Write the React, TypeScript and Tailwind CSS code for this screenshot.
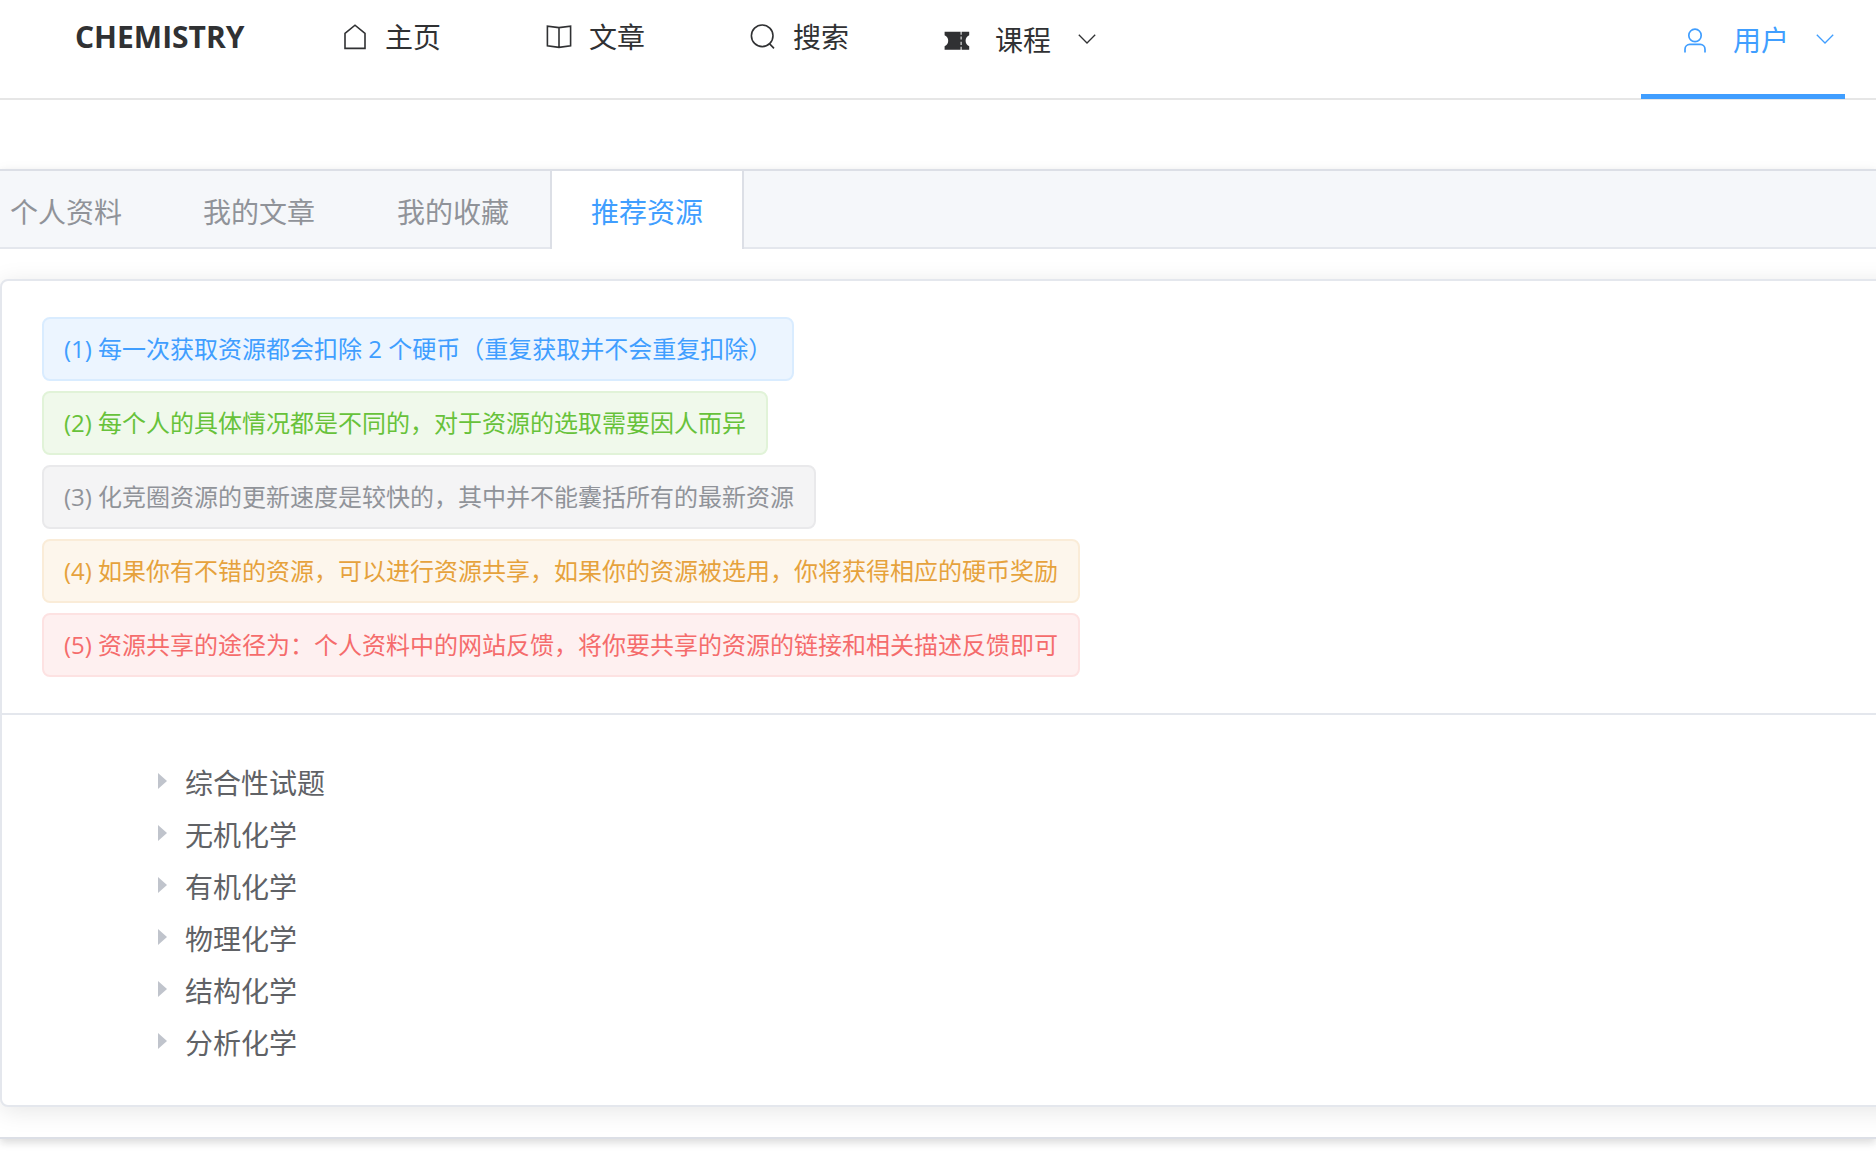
import React from 'react';
import clsx from 'clsx';

const navItems = [
  { label: '主页', icon: HouseIcon },
  { label: '文章', icon: BookIcon },
  { label: '搜索', icon: SearchIcon },
];

const tabs = ['个人资料', '我的文章', '我的收藏', '推荐资源'];

const notices = [
  { text: '(1) 每一次获取资源都会扣除 2 个硬币（重复获取并不会重复扣除）', color: 'bg-[#ecf5ff] border-[#d9ecff] text-[#409eff]' },
  { text: '(2) 每个人的具体情况都是不同的，对于资源的选取需要因人而异', color: 'bg-[#f0f9eb] border-[#e1f3d8] text-[#67c23a]' },
  { text: '(3) 化竞圈资源的更新速度是较快的，其中并不能囊括所有的最新资源', color: 'bg-[#f4f4f5] border-[#e9e9eb] text-[#909399]' },
  { text: '(4) 如果你有不错的资源，可以进行资源共享，如果你的资源被选用，你将获得相应的硬币奖励', color: 'bg-[#fdf6ec] border-[#faecd8] text-[#e6a23c]' },
  { text: '(5) 资源共享的途径为：个人资料中的网站反馈，将你要共享的资源的链接和相关描述反馈即可', color: 'bg-[#fef0f0] border-[#fde2e2] text-[#f56c6c]' },
];

const categories = ['综合性试题', '无机化学', '有机化学', '物理化学', '结构化学', '分析化学'];

function HouseIcon() {
  return (
    <svg viewBox="0 0 28 28" className="w-7 h-7" fill="none" stroke="currentColor" strokeWidth="1.6">
      <path d="M4 10.4 14 2.2l10 8.2v15H4z" />
    </svg>
  );
}

function BookIcon() {
  return (
    <svg viewBox="0 0 28 28" className="w-7 h-7" fill="none" stroke="currentColor" strokeWidth="1.6">
      <path d="M14 4.6 2.4 3.2v19.6L14 24.4l11.6-1.6V3.2zM14 4.6v19.8" />
    </svg>
  );
}

function SearchIcon() {
  return (
    <svg viewBox="0 0 28 28" className="w-7 h-7" fill="none" stroke="currentColor" strokeWidth="1.6">
      <circle cx="13.2" cy="12.8" r="10.8" />
      <path d="m20.4 20.6 4.6 4.8" />
    </svg>
  );
}

function TicketIcon() {
  return (
    <svg viewBox="0 0 28 28" className="w-7 h-7" fill="currentColor">
      <path d="M1.6 5.8h16v3h1v-3h7.6v3.4a6 6 0 0 0 0 11v3.6h-7.6v-3h-1v3h-16v-3.6a6 6 0 0 0 0-11zM17.6 10.6v3h1v-3zm0 5.2v3.2h1v-3.2z" fillRule="evenodd" />
    </svg>
  );
}

function UserIcon() {
  return (
    <svg viewBox="0 0 28 28" className="w-7 h-7" fill="none" stroke="currentColor" strokeWidth="1.7">
      <circle cx="14" cy="9.4" r="6.2" />
      <path d="M4 26.4v-3.2a4.8 4.8 0 0 1 4.8-4.8h10.4a4.8 4.8 0 0 1 4.8 4.8v3.2" />
    </svg>
  );
}

function ChevronIcon() {
  return (
    <svg viewBox="0 0 18 10" className="w-[18px] h-[10px] mb-0.5" fill="none" stroke="currentColor" strokeWidth="1.3">
      <path d="m.8.8 8.2 8.2L17.2.8" />
    </svg>
  );
}

function SubMenu({ label, icon, active }: { label: string; icon: React.ReactNode; active?: boolean }) {
  return (
    <button
      className={clsx(
        'flex items-center w-[204px] h-[99px] pt-0.5 pb-4 pl-[30px] border-b-[5px]',
        active ? 'border-[#409eff] text-[#409eff]' : 'border-transparent'
      )}
    >
      <span className="flex justify-center w-12">{icon}</span>
      <span className="ml-3.5 mr-[27px]">{label}</span>
      <ChevronIcon />
    </button>
  );
}

export default function App() {
  const [activeTab, setActiveTab] = React.useState('推荐资源');

  return (
    <div className="min-h-screen overflow-hidden bg-white text-[28px] leading-9 text-[#303133] font-['Open_Sans','Noto_Sans_CJK_SC',sans-serif]">
      {/* Top menu */}
      <header className="h-[100px] border-b-2 border-[#e6e6e6]">
        <nav className="flex items-start pr-[31px]">
          <a href="#" className="w-[291px] h-[74px] pl-[75px] flex items-center text-[30px] font-bold">CHEMISTRY</a>
          {navItems.map(({ label, icon: Icon }) => (
            <a key={label} href="#" className="flex items-center gap-1.5 w-[204px] h-[74px] pl-10">
              <span className="flex justify-center w-12"><Icon /></span>
              {label}
            </a>
          ))}
          <SubMenu label="课程" icon={<TicketIcon />} />
          <div className="ml-auto">
            <SubMenu label="用户" icon={<UserIcon />} active />
          </div>
        </nav>
      </header>

      {/* Tabs */}
      <section className="mt-[69px] border-y-2 border-[#dcdfe6] shadow-[0_4px_8px_rgba(0,0,0,0.12),0_0_12px_rgba(0,0,0,0.04)]">
        <div role="tablist" className="flex h-[78px] bg-[#f5f7fa] border-b-2 border-[#e4e7ed]">
          {tabs.map((tab, i) => (
            <button
              key={tab}
              role="tab"
              aria-selected={tab === activeTab}
              onClick={() => setActiveTab(tab)}
              className={clsx(
                'h-[78px] pt-1',
                i === 0 ? 'w-[162px] pr-[30px]' : 'w-[194px]',
                tab === activeTab ? 'bg-white border-x-2 border-[#dcdfe6] text-[#409eff]' : 'text-[#909399]'
              )}
            >
              {tab}
            </button>
          ))}
        </div>

        {/* Card runs past the right edge of the page */}
        <div className="py-[30px]">
          <div className="-mr-10 border-2 border-[#e4e7ed] rounded-lg bg-white shadow-[0_4px_24px_rgba(0,0,0,0.1)]">
            <div className="flex flex-col items-start gap-2.5 py-9 px-10 border-b-2 border-[#e4e7ed] text-2xl">
              {notices.map((notice) => (
                <span key={notice.text} className={clsx('flex items-center h-16 px-5 border-2 rounded-lg', notice.color)}>
                  {notice.text}
                </span>
              ))}
            </div>
            <ul className="pt-[42px] pb-9 pl-[156px] text-[#606266]">
              {categories.map((category) => (
                <li key={category}>
                  <button className="flex items-center h-[52px]">
                    <svg viewBox="0 0 9 16" className="w-[9px] h-4 mr-[18px] mb-1" fill="#c0c4cc">
                      <path d="M0 0l9 8-9 8z" />
                    </svg>
                    {category}
                  </button>
                </li>
              ))}
            </ul>
          </div>
        </div>
      </section>
    </div>
  );
}
